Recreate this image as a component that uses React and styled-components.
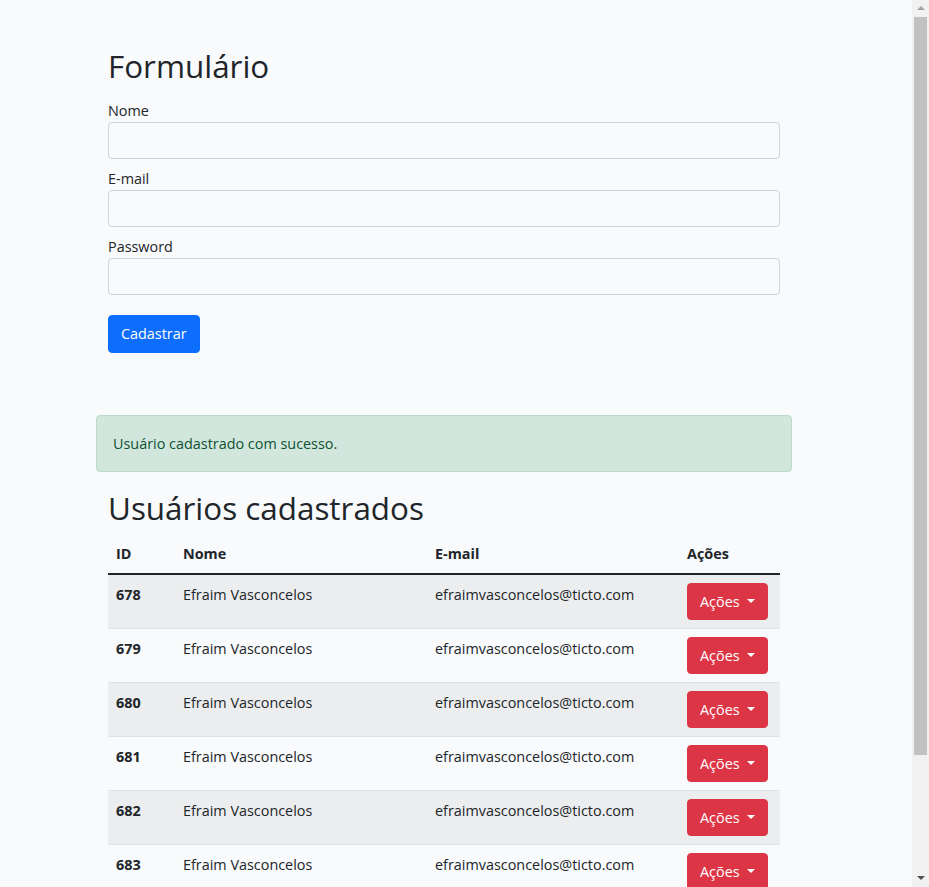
import React from "react";
import styled, { createGlobalStyle } from "styled-components";

const GlobalStyle = createGlobalStyle`
  html, body {
    margin: 0;
    padding: 0;
    background: #f8fafc;
  }
  body {
    padding-right: 17px;
    font-family: "Open Sans", "Noto Sans", sans-serif;
    font-size: 14.4px;
    line-height: 1.6;
    color: #212529;
  }
  * { box-sizing: border-box; }
`;

const Page = styled.main`
  width: 720px;
  margin: 0 auto;
  padding: 28px 0 40px;
`;

const FormSection = styled.section`
  padding: 0 12px;
  width: 696px;
`;

const Title = styled.h1`
  font-size: 31.4px;
  font-weight: 400;
  line-height: 1.2;
  margin: ${(p) => (p.$tight ? "17px 0 8px" : "19px 0 14px")};
`;

const Field = styled.div`
  width: 672px;
  margin-bottom: 8px;
`;

const Label = styled.label`
  display: block;
  font-size: 14.4px;
  line-height: 23px;
`;

const Input = styled.input`
  display: block;
  width: 100%;
  height: 37px;
  padding: 6px 12px;
  font: inherit;
  background: #f8fafc;
  border: 1px solid #ced4da;
  border-radius: 4px;
  color: #212529;
`;

const Button = styled.button`
  display: inline-flex;
  align-items: center;
  height: 37px;
  padding: 6px 12px;
  font: inherit;
  color: #fff;
  background: ${(p) => (p.$variant === "danger" ? "#dc3545" : "#0d6efd")};
  border: 1px solid ${(p) => (p.$variant === "danger" ? "#dc3545" : "#0d6efd")};
  border-radius: 4px;
  cursor: pointer;
`;

const SubmitButton = styled(Button)`
  height: 38px;
  margin-top: 12px;
`;

const Caret = styled.span`
  display: inline-block;
  margin-left: 7px;
  border-top: 4.3px solid #fff;
  border-left: 4.3px solid transparent;
  border-right: 4.3px solid transparent;
  transform: translateY(-1px);
`;

const Alert = styled.div`
  width: 696px;
  margin: 62px 0 0;
  padding: 16px;
  background: #d1e7dd;
  border: 1px solid #badbcc;
  border-radius: 4px;
  color: #0f5132;
`;

const Table = styled.table`
  width: 672px;
  border-collapse: collapse;
  table-layout: fixed;
  color: #212529;
`;

const Th = styled.th`
  text-align: left;
  font-weight: 700;
  padding: 8px;
  border-bottom: 2px solid #212529;
  width: ${(p) => p.$w}px;
`;

const Row = styled.tr`
  background: ${(p) => (p.$striped ? "#ecedef" : "transparent")};
  border-bottom: 1px solid #dee2e6;
`;

const Td = styled.td`
  padding: 8px;
  vertical-align: top;
  font-weight: ${(p) => (p.$bold ? 700 : 400)};
`;

const ScrollTrack = styled.div`
  position: fixed;
  top: 0;
  right: 0;
  width: 17px;
  height: 100vh;
  background: #f1f1f1;
  display: flex;
  flex-direction: column;
  align-items: center;
`;

const ScrollArrow = styled.div`
  margin: 6px 0;
  border-left: 4px solid transparent;
  border-right: 4px solid transparent;
  ${(p) =>
    p.$down
      ? "border-top: 4px solid #505050; margin-top: auto; margin-bottom: 7px;"
      : "border-bottom: 4px solid #a3a3a3;"}
`;

const ScrollThumb = styled.div`
  width: 13px;
  height: 738px;
  margin-top: 1px;
  background: #c1c1c1;
`;

const ids = [678, 679, 680, 681, 682, 683, 684, 685, 686, 687];

export default function App() {
  return (
    <>
      <GlobalStyle />
      <Page>
        <FormSection>
          <Title>Formulário</Title>
          <Field>
            <Label>Nome</Label>
            <Input type="text" />
          </Field>
          <Field>
            <Label>E-mail</Label>
            <Input type="email" />
          </Field>
          <Field>
            <Label>Password</Label>
            <Input type="password" />
          </Field>
          <SubmitButton>Cadastrar</SubmitButton>
        </FormSection>

        <Alert>Usuário cadastrado com sucesso.</Alert>

        <FormSection>
          <Title $tight>Usuários cadastrados</Title>
          <Table>
            <thead>
              <tr>
                <Th $w={67}>ID</Th>
                <Th $w={252}>Nome</Th>
                <Th $w={252}>E-mail</Th>
                <Th $w={101}>Ações</Th>
              </tr>
            </thead>
            <tbody>
              {ids.map((id, i) => (
                <Row key={id} $striped={i % 2 === 0}>
                  <Td $bold>{id}</Td>
                  <Td>Efraim Vasconcelos</Td>
                  <Td>efraimvasconcelos@ticto.com</Td>
                  <Td>
                    <Button $variant="danger">
                      Ações
                      <Caret />
                    </Button>
                  </Td>
                </Row>
              ))}
            </tbody>
          </Table>
        </FormSection>
      </Page>
      <ScrollTrack>
        <ScrollArrow />
        <ScrollThumb />
        <ScrollArrow $down />
      </ScrollTrack>
    </>
  );
}
